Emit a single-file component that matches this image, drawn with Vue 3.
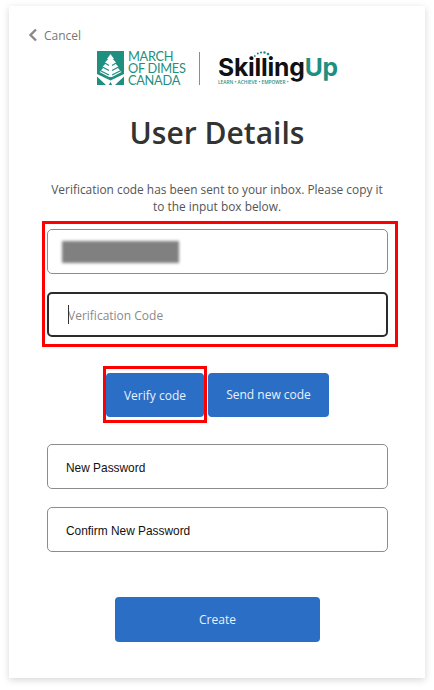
<script setup>
const blurWidth = '117px'
</script>

<template>
  <div class="page">
    <main class="card">
      <a class="cancel">
        <svg class="chev" width="10" height="14" viewBox="0 0 10 14"><path d="M8 1.5 L2.5 7 L8 12.5" fill="none" stroke="#8a8a8a" stroke-width="2.4"/></svg>
        <span>Cancel</span>
      </a>

      <div class="logos">
        <div class="mod">
          <svg width="27" height="34" viewBox="0 0 27 34">
            <rect width="27" height="34" fill="#1f8f80"/>
            <path d="M13.500 3 L17 8 L15.800 8 L19.500 12 L18 12 L22 16.500 L20.500 16.500 L24.500 21 L15 26 L12 26 L2.500 21 L6.500 16.500 L5 16.500 L9 12 L7.500 12 L11.200 8 L10 8 Z" fill="#fff"/>
            <path d="M7 11.500 L12 14.500 M20 11.500 L15 14.500 M4.500 15.500 L12 19.500 M22.500 15.500 L15 19.500 M3 19.500 L12 24 M24 19.500 L15 24" stroke="#1f8f80" stroke-width="1.200" fill="none"/>
            <path d="M0 23 L13.500 29.500 L27 23 L27 25.500 L18 34 L9 34 L0 25.500 Z" fill="#fff"/>
            <path d="M13.500 31 L11.800 34 L15.200 34 Z" fill="#1f8f80"/>
          </svg>
          <div class="mod-text"><span>MARCH</span><span>OF DIMES</span><span>CANADA</span></div>
        </div>
        <div class="rule"></div>
        <div class="skilling">
          <svg class="arc" width="22" height="11" viewBox="0 0 22 11">
            <g fill="#1f8f80">
              <circle cx="1.500" cy="8" r="0.800"/><circle cx="3.800" cy="5" r="0.900"/><circle cx="6.800" cy="2.500" r="1"/>
              <circle cx="10" cy="1.500" r="1.100"/><circle cx="13.500" cy="1.500" r="1.200"/><circle cx="17" cy="3" r="1.300"/>
              <circle cx="19.800" cy="6.500" r="1.500"/>
            </g>
          </svg>
          <div class="sk-name"><span class="sk-dark">Skilling</span><span class="sk-teal">Up</span></div>
          <div class="sk-tag">LEARN • ACHIEVE • EMPOWER •</div>
        </div>
      </div>

      <h1>User Details</h1>
      <p class="info">Verification code has been sent to your inbox. Please copy it to the input box below.</p>

      <section class="highlight-fields">
        <div class="field field-blur"><span class="blur" :style="{ width: blurWidth }"></span></div>
        <div class="field field-focus"><span class="caret"></span><span class="placeholder">Verification Code</span></div>
      </section>

      <div class="actions">
        <div class="highlight-btn"><button class="btn verify">Verify code</button></div>
        <button class="btn send">Send new code</button>
      </div>

      <div class="field field-pw"><span class="pw">New Password</span></div>
      <div class="field field-pw second"><span class="pw">Confirm New Password</span></div>

      <button class="btn create">Create</button>
    </main>
  </div>
</template>

<style>
html, body { margin: 0; background: #fff; }
</style>

<style scoped>
.page {
  width: 434px;
  height: 690px;
  box-sizing: border-box;
  padding: 6px 9px 12px;
  font-family: "Open Sans", "Noto Sans", sans-serif;
  overflow: hidden;
}
.card {
  height: 672px;
  box-sizing: border-box;
  background: #fff;
  box-shadow: 0 2px 7px rgba(0, 0, 0, 0.16);
  padding-top: 21px;
  display: flex;
  flex-direction: column;
}
.cancel {
  display: flex;
  align-items: center;
  gap: 6px;
  margin-left: 19px;
  height: 16px;
  font-size: 12px;
  color: #777;
}
.logos {
  display: flex;
  align-items: center;
  margin: 8px 0 0 88px;
  height: 34px;
}
.mod { display: flex; align-items: center; gap: 4px; width: 102px; }
.mod-text {
  display: flex;
  flex-direction: column;
  font-family: "Lato", sans-serif;
  font-size: 12.800px;
  line-height: 12px;
  letter-spacing: -0.3px;
  color: #1f8f80;
}
.rule {
  width: 1px;
  height: 33px;
  background: #4fa89c;
  margin-right: 18px;
}
.skilling { position: relative; height: 34px; width: 122px; }
.arc { position: absolute; left: 33px; top: 0; }
.sk-name {
  position: absolute;
  left: 0;
  top: 3px;
  font-family: "Inter", "Open Sans", sans-serif;
  font-size: 24.700px;
  line-height: 26px;
  font-weight: 700;
  letter-spacing: -0.2px;
  white-space: nowrap;
}
.sk-dark { color: #111; }
.sk-teal { color: #1f8f80; }
.sk-tag {
  position: absolute;
  left: 0;
  top: 29px;
  font-size: 4.800px;
  line-height: 5px;
  font-weight: 600;
  color: #2a8f84;
  white-space: nowrap;
}
h1 {
  margin: 28px 0 0;
  text-align: center;
  font-size: 30px;
  line-height: 40px;
  font-weight: 600;
  color: #333;
  font-family: "Open Sans", sans-serif;
}
.info {
  margin: 28px 40px 0;
  text-align: center;
  font-size: 11.900px;
  line-height: 17px;
  color: #555;
}
.highlight-fields {
  margin: 6px 0 0 33px;
  width: 356px;
  height: 126px;
  box-sizing: border-box;
  border: 3px solid #f00;
  padding: 5px 7px 0 2px;
  display: flex;
  flex-direction: column;
  gap: 18px;
}
.field {
  box-sizing: border-box;
  width: 341px;
  height: 45px;
  border: 1px solid #8c8c8c;
  border-radius: 5px;
  display: flex;
  align-items: center;
  background: #fff;
}
.field-blur { padding-left: 14px; }
.blur {
  display: block;
  height: 22px;
  background: #808080;
  filter: blur(1.500px);
}
.field-focus {
  border: 2px solid #2b2b2b;
  padding: 2px 0 0 19px;
  position: relative;
}
.caret {
  position: absolute;
  left: 19px;
  top: 11px;
  width: 1px;
  height: 19px;
  background: #333;
}
.placeholder { font-size: 12px; color: #8a8a8a; }
.actions {
  display: flex;
  align-items: center;
  margin: 19px 0 0 94px;
  height: 57px;
}
.highlight-btn {
  box-sizing: border-box;
  width: 104px;
  height: 57px;
  border: 3px solid #f00;
  padding: 4px 0 0;
  margin-right: 1px;
}
.btn {
  box-sizing: border-box;
  border: none;
  border-radius: 4px;
  background: #2a6ec6;
  color: #e9f1fb;
  font-family: "Open Sans", sans-serif;
  font-size: 12px;
  padding: 0;
  display: block;
}
.verify { width: 98px; height: 44px; }
.send { width: 121px; height: 44px; }
.field-pw {
  margin: 21px 0 0 38px;
  padding: 2px 0 0 18px;
  height: 45px;
}
.field-pw.second { margin-top: 18px; }
.pw {
  font-family: "Liberation Sans", Arial, sans-serif;
  font-size: 11.900px;
  color: #111;
}
.create {
  margin: 45px 0 0 106px;
  width: 205px;
  height: 45px;
}
</style>
